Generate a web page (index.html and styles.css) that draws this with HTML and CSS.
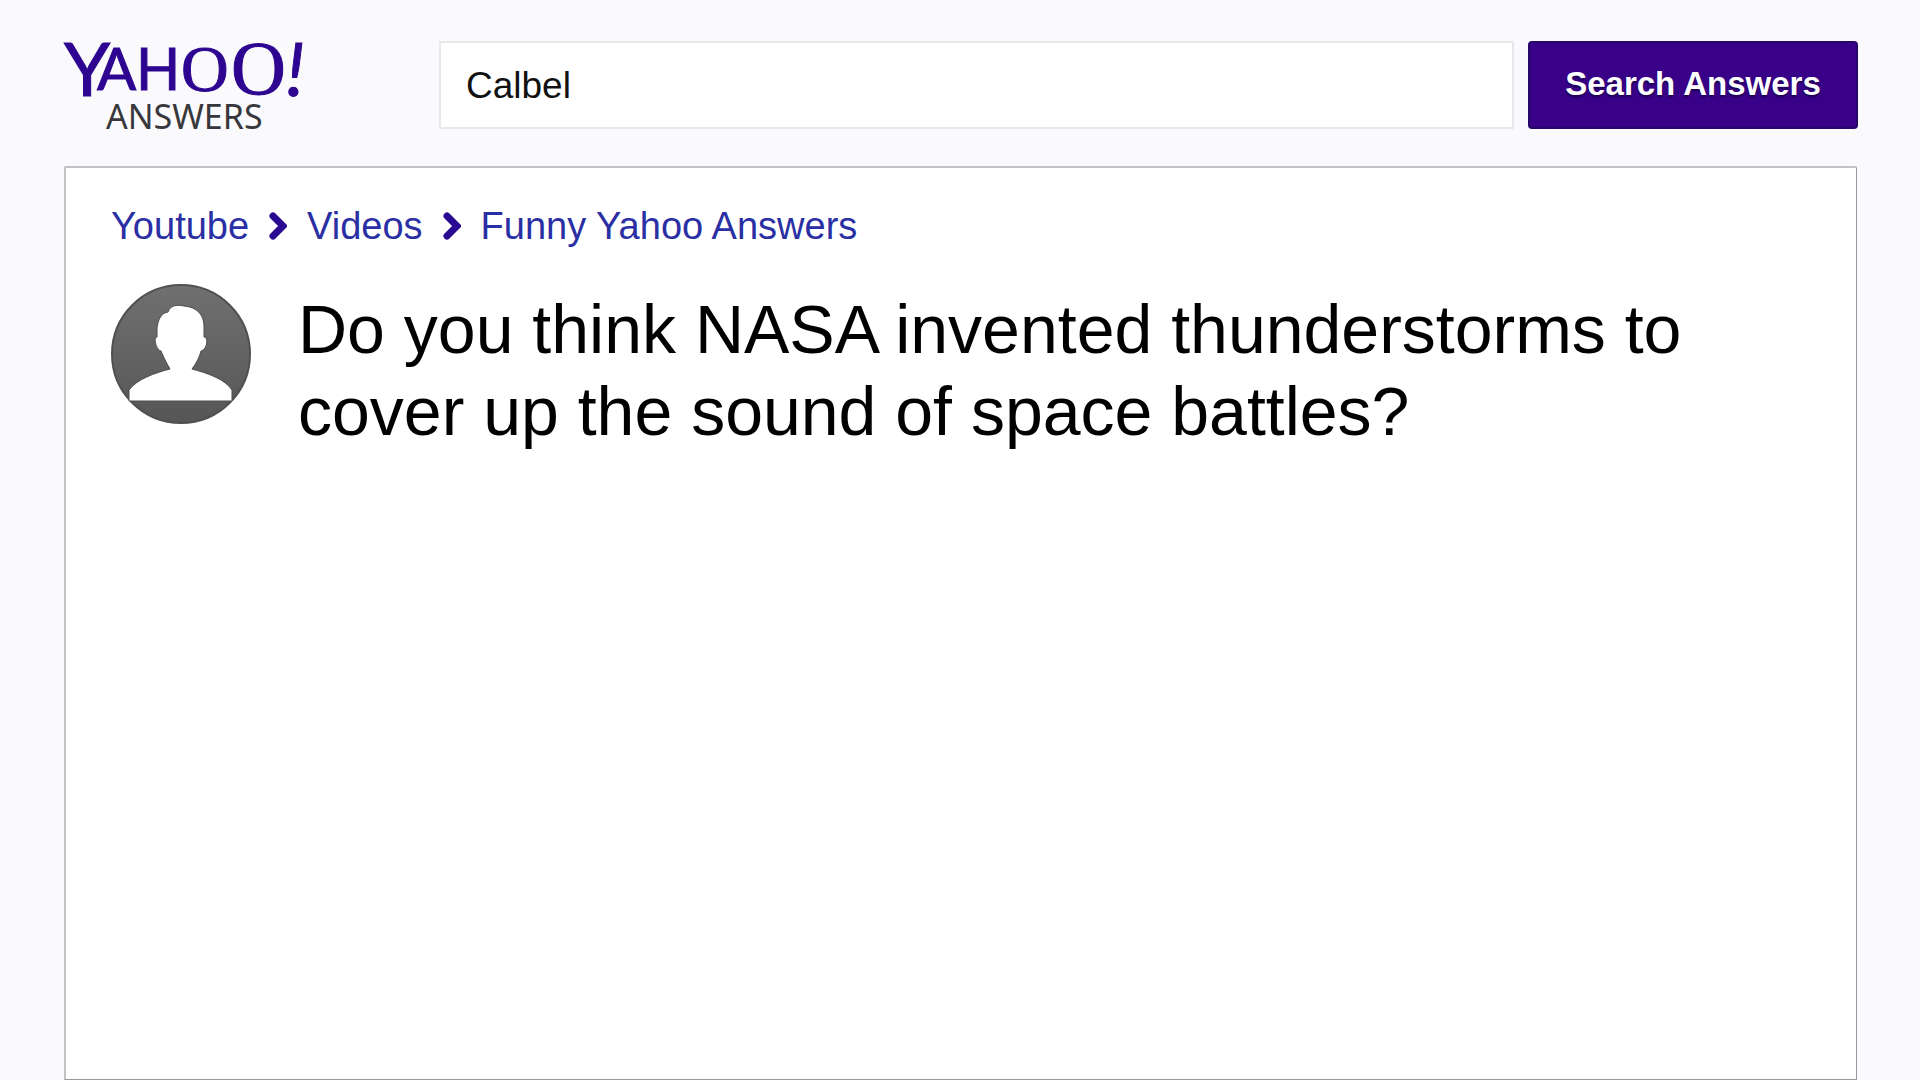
FILE: index.html
```html
<!DOCTYPE html>
<html lang="en">
<head>
<meta charset="utf-8">
<meta name="viewport" content="width=device-width, initial-scale=1">
<title>Yahoo Answers</title>
<link rel="stylesheet" href="styles.css">
</head>
<body>
<header class="header">
  <a class="logo" href="#" aria-label="Yahoo Answers">
    <svg class="logo-mark" viewBox="0 0 244 94" width="244" height="94">
      <text class="logo-yahoo"><tspan class="logo-tall" x="0" y="55">Y</tspan><tspan class="logo-mid" x="33" y="49">A</tspan><tspan class="logo-mid" x="72" y="49">H</tspan><tspan class="logo-o" x="117" y="50">O</tspan><tspan class="logo-big-o" x="167" y="53">O</tspan><tspan class="logo-bang" x="222" y="55">!</tspan></text>
      <text class="logo-answers" x="42" y="88">ANSWERS</text>
    </svg>
  </a>
  <form class="search" role="search">
    <input class="search-input" type="text" value="Calbel" aria-label="Search">
    <button class="search-button" type="button">Search Answers</button>
  </form>
</header>
<main class="panel">
  <nav class="breadcrumb" aria-label="Breadcrumb">
    <a href="#">Youtube</a>
    <svg class="chevron" viewBox="0 0 18 28" width="18" height="28"><path d="M4 4 14 14 4 24"/></svg>
    <a href="#">Videos</a>
    <svg class="chevron" viewBox="0 0 18 28" width="18" height="28"><path d="M4 4 14 14 4 24"/></svg>
    <a href="#">Funny Yahoo Answers</a>
  </nav>
  <article class="question">
    <svg class="avatar" viewBox="0 0 140 140" width="140" height="140" role="img" aria-label="User">
      <defs><linearGradient id="shade" x1="0" y1="0" x2="0" y2="1"><stop offset="0" stop-color="#707070"/><stop offset="1" stop-color="#565656"/></linearGradient></defs>
      <circle cx="70" cy="70" r="69" fill="url(#shade)" stroke="#505050" stroke-width="2"/>
      <path class="avatar-person" d="M57 28C60 20 67 21 73 22C86 23 93 31 93 42V53C98 53 96 66 90 67C88 74 86 78 81 85C96 89 114 95 121 106V117H18V106C26 95 44 89 59 85C55 78 53 74 50 67C45 66 42 53 46 53V44C47 36 50 29 57 28Z"/>
    </svg>
    <h1 class="question-title">Do you think NASA invented thunderstorms to cover up the sound of space battles?</h1>
  </article>
</main>
</body>
</html>
```
FILE: styles.css
```css
* {
  box-sizing: border-box;
}

body {
  margin: 0;
  min-height: 100vh;
  padding: 41px 62px 0 64px;
  display: flex;
  flex-direction: column;
  gap: 37px;
  background: #fafafd;
  color: #000;
  font-family: "Liberation Sans", Arial, sans-serif;
}

.header {
  display: flex;
  height: 88px;
}

.logo {
  flex: 0 0 375px;
}

.logo-mark {
  display: block;
  overflow: visible;
}

.logo-yahoo {
  fill: #2d0590;
  stroke: #2d0590;
  stroke-width: 1;
  font-family: Lato, sans-serif;
}

.logo-tall {
  font-size: 74px;
}

.logo-mid {
  font-size: 58px;
}

.logo-o {
  font-family: "Liberation Serif", serif;
  font-size: 66px;
}

.logo-big-o {
  font-family: "Liberation Serif", serif;
  font-size: 76px;
}

.logo-bang {
  font-size: 74px;
  font-style: italic;
}

.logo-answers {
  fill: #38383c;
  font-family: "Noto Sans", sans-serif;
  font-size: 34px;
}

.search {
  flex: 1;
  display: flex;
  gap: 14px;
}

.search-input {
  flex: 1;
  min-width: 0;
  height: 88px;
  padding: 2px 25px 0;
  border: 2px solid #e8e8ea;
  background: #fff;
  color: #111;
  font: 37px "Liberation Sans", Arial, sans-serif;
}

.search-button {
  flex: 0 0 330px;
  height: 88px;
  padding: 0 0 2px;
  border: 2px solid #27066a;
  border-radius: 4px;
  background: #390088;
  color: #fff;
  font: bold 33px "Liberation Sans", Arial, sans-serif;
  text-shadow: 0 2px 2px #1c0050;
}

.panel {
  flex: 1;
  margin-right: 1px;
  padding: 37px 45px;
  border: 2px solid #c2c2c4;
  border-right: 1px solid #999;
  border-bottom: 1px solid #999;
  border-radius: 2px 2px 0 0;
  background: #fff;
}

.breadcrumb {
  display: flex;
  align-items: center;
  gap: 20px;
  font-size: 38px;
  line-height: 42px;
}

.breadcrumb a {
  color: #2a2fa4;
  text-decoration: none;
}

.chevron {
  fill: none;
  stroke: #2b0a92;
  stroke-width: 7;
  stroke-linecap: round;
}

.question {
  display: flex;
  align-items: flex-start;
  gap: 47px;
  margin-top: 37px;
}

.avatar {
  flex: none;
}

.avatar-person {
  fill: #fff;
  stroke: #4c4c4c;
  stroke-width: 1;
}

.question-title {
  margin: 4px 0 0;
  font-size: 68px;
  font-weight: 400;
  line-height: 82px;
}
```
